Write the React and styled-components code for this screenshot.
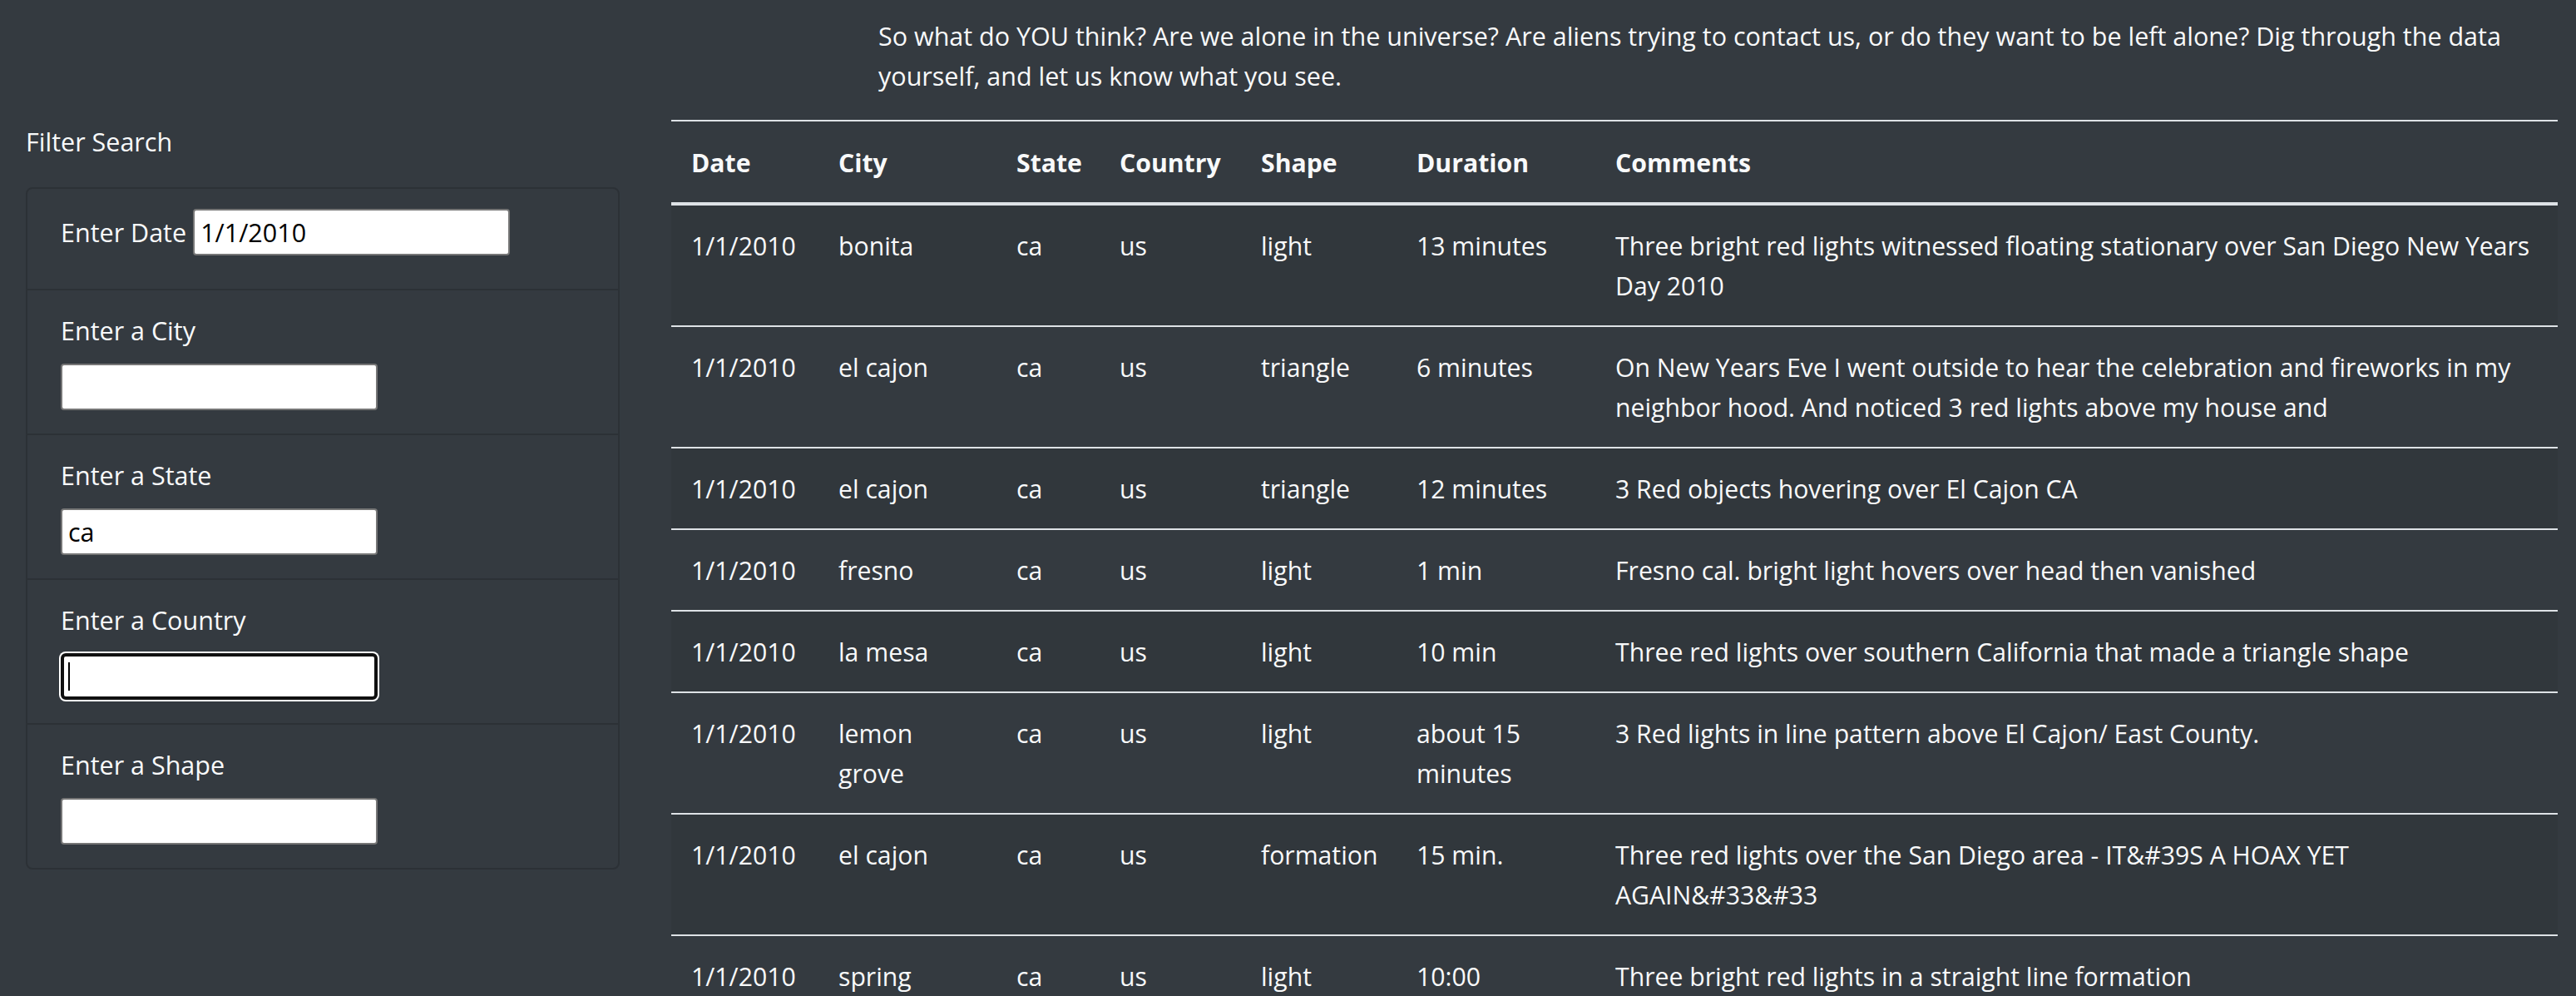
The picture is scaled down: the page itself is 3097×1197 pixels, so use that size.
import React from "react";
import styled, { createGlobalStyle } from "styled-components";

const GlobalStyle = createGlobalStyle`
  html, body {
    margin: 0;
    padding: 0;
    background: #343a40;
  }
  body {
    font-family: "Open Sans", "Noto Sans", sans-serif;
    font-size: 30.5px;
    line-height: 48px;
    color: #f8f9fa;
  }
  * { box-sizing: border-box; }
`;

const Page = styled.div`
  display: flex;
  align-items: flex-start;
  width: 3097px;
  height: 1197px;
  overflow: hidden;
`;

const Sidebar = styled.aside`
  width: 775px;
  flex: none;
  padding: 146px 30px 0 31px;
`;

const SidebarTitle = styled.h2`
  margin: 0 0 31px;
  font-size: 30.5px;
  font-weight: 400;
  line-height: 48px;
`;

const Card = styled.ul`
  list-style: none;
  margin: 0;
  padding: 0;
  width: 714px;
  border: 2px solid #2c3136;
  border-radius: 8px;
`;

const FilterItem = styled.li`
  padding: 24px 40px ${(p) => (p.$inline ? "40px" : "28px")};
  border-top: ${(p) => (p.$first ? "none" : "2px solid #2c3136")};
  display: flex;
  flex-direction: ${(p) => (p.$inline ? "row" : "column")};
  align-items: ${(p) => (p.$inline ? "center" : "flex-start")};
  gap: ${(p) => (p.$inline ? "8px" : "16px")};
`;

const Label = styled.label`
  font-size: 30.5px;
  line-height: 48px;
  color: #f8f9fa;
`;

const InputWrap = styled.span`
  position: relative;
  display: block;
`;

const TextInput = styled.input`
  display: block;
  width: 381px;
  height: 56px;
  margin: 0;
  padding: 0 7px;
  font-family: "Open Sans", "Noto Sans", sans-serif;
  font-size: 30.5px;
  color: #000;
  background: #fff;
  border: ${(p) => (p.$focused ? "4px solid #101010" : "2px solid #767676")};
  border-radius: ${(p) => (p.$focused ? "6px" : "4px")};
  box-shadow: ${(p) => (p.$focused ? "0 0 0 2px #ffffff" : "none")};
  outline: none;
`;

const Caret = styled.span`
  position: absolute;
  left: 9px;
  top: 11px;
  width: 2px;
  height: 34px;
  background: #000;
`;

const Main = styled.main`
  flex: 1;
  padding: 19px 22px 0 32px;
`;

const Intro = styled.p`
  margin: 0 0 29px 249px;
  font-size: 30.5px;
  line-height: 48px;
`;

const Table = styled.table`
  width: 100%;
  border-collapse: collapse;
  table-layout: fixed;
  color: #f8f9fa;
  font-size: 30.2px;
`;

const Col = styled.col`
  width: ${(p) => p.$w};
`;

const HeadCell = styled.th`
  padding: 26px 24px 23px;
  text-align: left;
  vertical-align: bottom;
  font-weight: 700;
  font-size: 30.2px;
  line-height: 48px;
  border-top: 2px solid #dee2e6;
  border-bottom: 4px solid #dee2e6;
`;

const Row = styled.tr`
  background: ${(p) => (p.$odd ? "rgba(0, 0, 0, 0.05)" : "transparent")};
`;

const Cell = styled.td`
  padding: 25px 24px 23px;
  vertical-align: top;
  font-size: 30.2px;
  line-height: 48px;
  border-top: 2px solid #dee2e6;
`;

const columns = [
  { key: "date", label: "Date", w: "177px" },
  { key: "city", label: "City", w: "214px" },
  { key: "state", label: "State", w: "124px" },
  { key: "country", label: "Country", w: "170px" },
  { key: "shape", label: "Shape", w: "187px" },
  { key: "duration", label: "Duration", w: "239px" },
  { key: "comments", label: "Comments", w: "auto" },
];

const rows = [
  { date: "1/1/2010", city: "bonita", state: "ca", country: "us", shape: "light", duration: "13 minutes", comments: "Three bright red lights witnessed floating stationary over San Diego New Years Day 2010" },
  { date: "1/1/2010", city: "el cajon", state: "ca", country: "us", shape: "triangle", duration: "6 minutes", comments: "On New Years Eve I went outside to hear the celebration and fireworks in my neighbor hood. And noticed 3 red lights above my house and" },
  { date: "1/1/2010", city: "el cajon", state: "ca", country: "us", shape: "triangle", duration: "12 minutes", comments: "3 Red objects hovering over El Cajon CA" },
  { date: "1/1/2010", city: "fresno", state: "ca", country: "us", shape: "light", duration: "1 min", comments: "Fresno cal. bright light hovers over head then vanished" },
  { date: "1/1/2010", city: "la mesa", state: "ca", country: "us", shape: "light", duration: "10 min", comments: "Three red lights over southern California that made a triangle shape" },
  { date: "1/1/2010", city: "lemon grove", state: "ca", country: "us", shape: "light", duration: "about 15 minutes", comments: "3 Red lights in line pattern above El Cajon/ East County." },
  { date: "1/1/2010", city: "el cajon", state: "ca", country: "us", shape: "formation", duration: "15 min.", comments: "Three red lights over the San Diego area - IT&#39S A HOAX YET AGAIN&#33&#33" },
  { date: "1/1/2010", city: "spring valley", state: "ca", country: "us", shape: "light", duration: "10:00", comments: "Three bright red lights in a straight line formation" },
];

const filters = [
  { id: "datetime", label: "Enter Date", value: "1/1/2010", inline: true },
  { id: "city", label: "Enter a City", value: "" },
  { id: "state", label: "Enter a State", value: "ca" },
  { id: "country", label: "Enter a Country", value: "", focused: true },
  { id: "shape", label: "Enter a Shape", value: "" },
];

export default function App() {
  return (
    <>
      <GlobalStyle />
      <Page>
        <Sidebar>
          <SidebarTitle>Filter Search</SidebarTitle>
          <Card>
            {filters.map((f, i) => (
              <FilterItem key={f.id} $first={i === 0} $inline={f.inline}>
                <Label htmlFor={f.id}>{f.label}</Label>
                <InputWrap>
                  <TextInput
                    id={f.id}
                    type="text"
                    defaultValue={f.value}
                    $focused={f.focused}
                  />
                  {f.focused && <Caret />}
                </InputWrap>
              </FilterItem>
            ))}
          </Card>
        </Sidebar>
        <Main>
          <Intro>
            So what do YOU think? Are we alone in the universe? Are aliens trying to contact us, or do they want to be left alone? Dig through the data yourself, and let us know what you see.
          </Intro>
          <Table>
            <colgroup>
              {columns.map((c) => (
                <Col key={c.key} $w={c.w} />
              ))}
            </colgroup>
            <thead>
              <tr>
                {columns.map((c) => (
                  <HeadCell key={c.key}>{c.label}</HeadCell>
                ))}
              </tr>
            </thead>
            <tbody>
              {rows.map((r, i) => (
                <Row key={i} $odd={i % 2 === 0}>
                  {columns.map((c) => (
                    <Cell key={c.key}>{r[c.key]}</Cell>
                  ))}
                </Row>
              ))}
            </tbody>
          </Table>
        </Main>
      </Page>
    </>
  );
}
